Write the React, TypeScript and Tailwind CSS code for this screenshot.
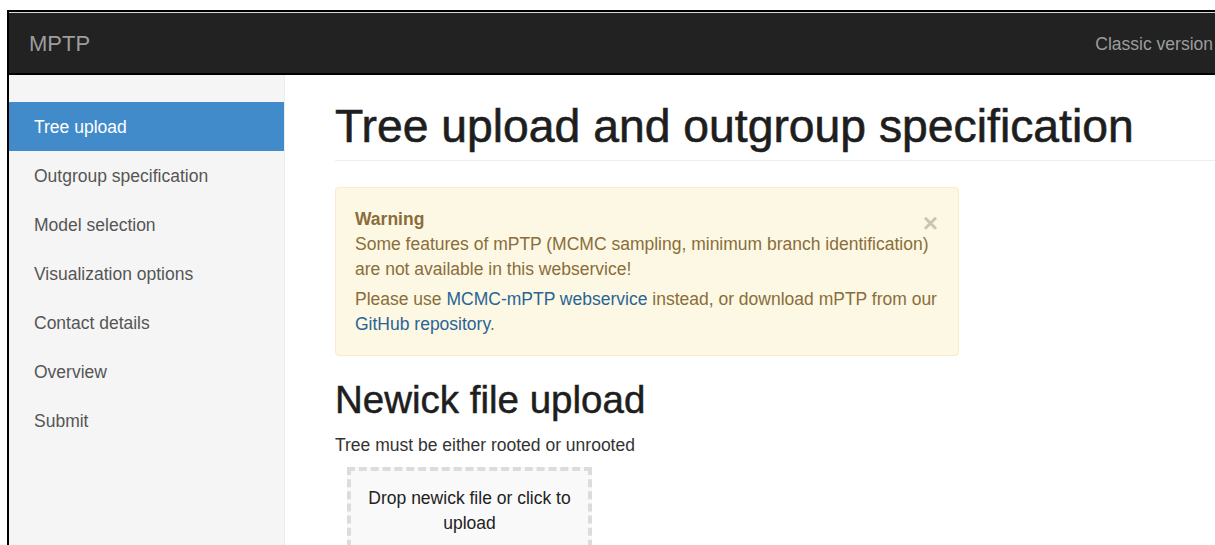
import React from "react";

const navItems = [
  "Tree upload",
  "Outgroup specification",
  "Model selection",
  "Visualization options",
  "Contact details",
  "Overview",
  "Submit",
];

function CloseMark() {
  return (
    <button
      type="button"
      aria-label="Close"
      className="absolute right-[20px] top-[22px] text-[26px] font-bold leading-[26px] text-black opacity-20"
    >
      ×
    </button>
  );
}

export default function App() {
  return (
    <div
      className="h-[545px] w-[1215px] overflow-hidden bg-white pl-[7px] pt-[10px] text-[#333]"
      style={{ fontFamily: '"Liberation Sans", Arial, Helvetica, sans-serif' }}
    >
      <div className="flex h-full flex-col border-l-2 border-t-2 border-black">
        {/* top bar */}
        <div className="border-t border-[#d9d9d9]" />
        <header className="flex h-[62px] shrink-0 items-center justify-between border-b-2 border-black bg-[#222] pl-[20px] pr-[2px]">
          <span className="text-[22px] text-[#9d9d9d]">MPTP</span>
          <span className="pt-[3px] text-[17.5px] text-[#9d9d9d]">Classic version</span>
        </header>

        <div className="flex min-h-0 flex-1">
          {/* sidebar */}
          <aside className="w-[276px] shrink-0 border-r border-[#ececec] bg-[#f5f5f5] pt-[27px]">
            <ul>
              {navItems.map((item, i) => (
                <li key={item}>
                  <a
                    className={
                      i === 0
                        ? "block h-[49px] bg-[#428bca] pl-[25px] pt-[1px] text-[17.5px] leading-[49px] text-white"
                        : "block h-[49px] pl-[25px] pt-[1px] text-[17.5px] leading-[49px] text-[#555]"
                    }
                  >
                    {item}
                  </a>
                </li>
              ))}
            </ul>
          </aside>

          {/* main content */}
          <main className="min-w-0 flex-1 pl-[50px]">
            <h1 className="mt-[26px] whitespace-nowrap border-b border-[#eee] pb-[9px] text-[46.3px] leading-[50px] text-[#1e1e1e] [-webkit-text-stroke:0.6px_#1e1e1e]">
              Tree upload and outgroup specification
            </h1>

            <div className="relative mt-[26px] w-[624px] rounded-[4px] border border-[#faebcc] bg-[#fcf8e3] px-[19px] pb-[18px] pt-[19px] text-[17.5px] leading-[25px] text-[#8a6d3b]">
              <CloseMark />
              <p className="whitespace-nowrap">
                <strong>Warning</strong>
                <br />
                Some features of mPTP (MCMC sampling, minimum branch identification)
                <br />
                are not available in this webservice!
              </p>
              <p className="mt-[5px] whitespace-nowrap">
                Please use <a className="text-[#2a6496]">MCMC-mPTP webservice</a> instead, or download mPTP from our
                <br />
                <a className="text-[#2a6496]">GitHub repository</a>.
              </p>
            </div>

            <h2 className="mt-[23px] text-[38.5px] leading-[42px] text-[#1e1e1e] [-webkit-text-stroke:0.5px_#1e1e1e]">
              Newick file upload
            </h2>
            <p className="mt-[12px] text-[17.5px] leading-[25px] text-[#333]">
              Tree must be either rooted or unrooted
            </p>

            <div className="ml-[12px] mt-[9px] w-[245px] border-4 border-dashed border-[#dcdcdc] bg-[#f9f9f9] px-[12px] pb-[20px] pt-[15px] text-center text-[17.5px] leading-[25px] text-[#222]">
              Drop newick file or click to upload
            </div>
          </main>
        </div>
      </div>
    </div>
  );
}
